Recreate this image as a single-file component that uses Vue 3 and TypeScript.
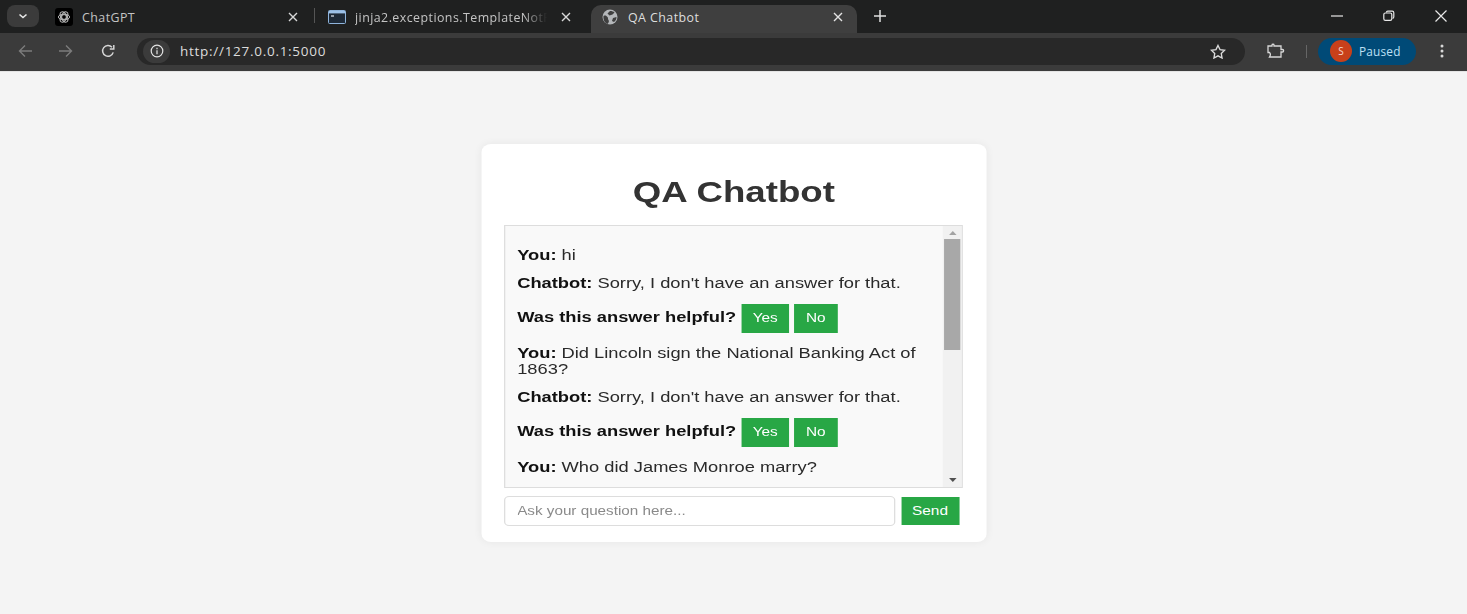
<template>
  <div class="page">
    <div class="tabstrip">
      <button class="tab-search">
        <svg width="12" height="12" viewBox="0 0 12 12"><path d="M2.5 4.500 6 7.500l3.500-3" fill="none" stroke="#e8e8e8" stroke-width="1.6" /></svg>
      </button>
      <div class="tab tab-first">
        <span class="gpt-icon">
          <svg width="14" height="14" viewBox="0 0 14 14" fill="none" stroke="#b8b8b8" stroke-width="1">
            <circle cx="7" cy="7" r="2.400" />
            <ellipse cx="7" cy="7" rx="5.600" ry="2.900" />
            <ellipse cx="7" cy="7" rx="5.600" ry="2.900" transform="rotate(60 7 7)" />
            <ellipse cx="7" cy="7" rx="5.600" ry="2.900" transform="rotate(120 7 7)" />
          </svg>
        </span>
        <span class="tab-title">ChatGPT</span>
        <svg class="tab-close" width="10" height="10" viewBox="0 0 10 10"><path d="M1 1l8 8M9 1 1 9" stroke="#d8d8d8" stroke-width="1.4" /></svg>
      </div>
      <span class="tab-sep"></span>
      <div class="tab tab-second">
        <svg class="term-icon" width="18" height="14" viewBox="0 0 18 14">
          <rect x="0.5" y="0.5" width="17" height="13" rx="1" fill="#1e2a38" stroke="#8fb4dc" />
          <rect x="1" y="1" width="16" height="2.400" fill="#9cc1e8" />
          <path d="M3 6h3" stroke="#dfe8f2" stroke-width="1.2" />
        </svg>
        <span class="tab-title fade">jinja2.exceptions.TemplateNotFound</span>
        <svg class="tab-close" width="10" height="10" viewBox="0 0 10 10"><path d="M1 1l8 8M9 1 1 9" stroke="#d8d8d8" stroke-width="1.4" /></svg>
      </div>
      <div class="tab tab-active">
        <svg width="16" height="16" viewBox="0 0 16 16">
          <circle cx="8" cy="8" r="7.500" fill="#b4b7ba" />
          <path d="M1.500 7c2-1 3 0 4 1s0 2 1 3 0 3-1 4C3 14 1 11 1.500 7zM8 2c2 0 3.500.5 4.500 1.500l-2 2-3 1-2-2zM11 9l3.500-1c0 2-1 4-2.500 5l-2-1z" fill="#3f3f3f" />
        </svg>
        <span class="tab-title">QA Chatbot</span>
        <svg class="tab-close" width="10" height="10" viewBox="0 0 10 10"><path d="M1 1l8 8M9 1 1 9" stroke="#e4e4e4" stroke-width="1.4" /></svg>
      </div>
      <svg class="new-tab" width="12" height="12" viewBox="0 0 12 12"><path d="M6 0v12M0 6h12" stroke="#e0e0e0" stroke-width="1.5" /></svg>
      <div class="win-controls">
        <svg width="12" height="12" viewBox="0 0 12 12"><path d="M0 6h12" stroke="#e8e8e8" stroke-width="1.2" /></svg>
        <svg width="12" height="12" viewBox="0 0 12 12" fill="none" stroke="#e8e8e8" stroke-width="1.2"><rect x="0.8" y="3" width="8" height="7.400" rx="1.600" /><path d="M3.400 2.600c0-1 .6-1.400 1.400-1.400h4.400c1 0 1.600.6 1.600 1.600v4c0 .9-.4 1.400-1.200 1.500" /></svg>
        <svg width="12" height="12" viewBox="0 0 12 12"><path d="M.5.5l11 11M11.500.5l-11 11" stroke="#e8e8e8" stroke-width="1.2" /></svg>
      </div>
    </div>

    <div class="toolbar">
      <svg class="nav-icon" width="14" height="14" viewBox="0 0 14 14" fill="none" stroke="#7c7c7c" stroke-width="1.4"><path d="M14 7H1.500M7 1.500 1.500 7 7 12.500" /></svg>
      <svg class="nav-icon forward" width="14" height="14" viewBox="0 0 14 14" fill="none" stroke="#7c7c7c" stroke-width="1.4"><path d="M0 7h12.500M7 1.500 12.500 7 7 12.500" /></svg>
      <svg class="nav-icon reload" width="14" height="14" viewBox="0 0 14 14" fill="none" stroke="#d6d6d6" stroke-width="1.5"><path d="M12.200 8.400A5.400 5.400 0 1 1 11 3.200" /><path d="M12.800 1v4h-4" /></svg>
      <div class="omnibox">
        <span class="info-chip">
          <svg width="14" height="14" viewBox="0 0 14 14" fill="none" stroke="#e4e4e4" stroke-width="1.2"><circle cx="7" cy="7" r="5.800" /><path d="M7 6.200v4M7 3.800v1.400" /></svg>
        </span>
        <span class="url">http://127.0.0.1:5000</span>
        <svg class="star" width="16" height="15" viewBox="0 0 18 17" fill="none" stroke="#dcdcdc" stroke-width="1.500"><path d="M9 1.600l2.300 4.800 5.200.7-3.800 3.600.9 5.200L9 13.400l-4.600 2.500.9-5.200L1.500 7.100l5.200-.7z" /></svg>
      </div>
      <svg class="ext-icon" width="18" height="16" viewBox="0 0 18 16" fill="none" stroke="#d8d8d8" stroke-width="1.3"><path d="M1 3h4V2c0-1 2-1 2 0v1h7v3.500h1.500c1.500 0 1.500 2.500 0 2.500H14v5H2.500c1-1.500 1-3.500 0-4.500H1z" /></svg>
      <span class="tool-sep"></span>
      <div class="profile">
        <span class="avatar">S</span>
        <span class="paused">Paused</span>
      </div>
      <svg class="menu" width="4" height="14" viewBox="0 0 4 14" fill="#d8d8d8"><circle cx="2" cy="2" r="1.500" /><circle cx="2" cy="7" r="1.500" /><circle cx="2" cy="12" r="1.500" /></svg>
    </div>

    <main class="content">
      <div class="card">
        <h1>QA Chatbot</h1>
        <div class="chat-box">
          <div class="messages">
            <template v-for="(m, i) in messages" :key="i">
              <div class="msg"><strong>You:</strong> {{ m.question }}</div>
              <template v-if="m.answer">
                <div class="msg"><strong>Chatbot:</strong> {{ m.answer }}</div>
                <div class="feedback">
                  <strong>Was this answer helpful?</strong>
                  <button class="btn yes">Yes</button>
                  <button class="btn no">No</button>
                </div>
              </template>
            </template>
          </div>
          <div class="scrollbar">
            <span class="arrow up"></span>
            <span class="thumb"></span>
            <span class="arrow down"></span>
          </div>
        </div>
        <div class="input-row">
          <input type="text" placeholder="Ask your question here..." />
          <button class="btn send">Send</button>
        </div>
      </div>
    </main>
  </div>
</template>

<script setup lang="ts">
interface Message {
  question: string
  answer?: string
}

const sorry = "Sorry, I don't have an answer for that."

const messages: Message[] = [
  { question: 'hi', answer: sorry },
  { question: 'Did Lincoln sign the National Banking Act of 1863?', answer: sorry },
  { question: 'Who did James Monroe marry?' }
]
</script>

<style>
html,
body {
  margin: 0;
  background: #f4f4f4;
}
</style>

<style scoped>
.page {
  display: flex;
  flex-direction: column;
  width: 1467px;
  height: 614px;
  overflow: hidden;
  font-family: "Liberation Sans", Arial, sans-serif;
}

/* browser chrome */
.tabstrip {
  display: flex;
  align-items: flex-end;
  height: 33px;
  flex: none;
  background: #1f2020;
  font-family: "Open Sans", sans-serif;
  font-size: 12.4px;
  color: #c4c4c4;
}

.tab-search {
  display: flex;
  align-items: center;
  justify-content: center;
  width: 32px;
  height: 22px;
  margin: 0 0 6px 7px;
  padding: 0;
  border: none;
  border-radius: 8px;
  background: #3b3b3b;
}

.tab {
  display: flex;
  align-items: center;
  height: 28px;
  box-sizing: border-box;
  padding-bottom: 4px;
}

.tab-title {
  white-space: nowrap;
  letter-spacing: 0.45px;
}

.tab-first {
  width: 275px;
  padding-left: 16px;
}

.gpt-icon {
  display: flex;
  align-items: center;
  justify-content: center;
  width: 18px;
  height: 18px;
  margin-right: 9px;
  border-radius: 3px;
  background: #000;
}

.tab-first .tab-close {
  margin-left: auto;
  margin-right: 16px;
}

.tab-sep {
  width: 1px;
  height: 15px;
  margin: 0 13px 10px 0;
  background: #555;
}

.tab-second {
  width: 263px;
}

.term-icon {
  margin-right: 9px;
  flex: none;
}

.fade {
  width: 192px;
  overflow: hidden;
  -webkit-mask-image: linear-gradient(to right, #000 88%, transparent);
  mask-image: linear-gradient(to right, #000 88%, transparent);
}

.tab-second .tab-close {
  margin-left: 14px;
}

.tab-active {
  width: 266px;
  padding-left: 11px;
  border-radius: 10px 10px 0 0;
  background: #3f3f3f;
  color: #dedede;
}

.tab-active .tab-title {
  margin-left: 10px;
}

.tab-active .tab-close {
  margin-left: auto;
  margin-right: 14px;
}

.new-tab {
  margin: 0 0 11px 17px;
}

.win-controls {
  display: flex;
  gap: 40px;
  margin: 0 20px 11px auto;
}

.toolbar {
  display: flex;
  align-items: center;
  height: 38px;
  flex: none;
  box-sizing: border-box;
  padding-bottom: 2px;
  background: #3b3b3b;
  font-family: "Open Sans", sans-serif;
}

.nav-icon {
  margin-left: 18px;
  flex: none;
}

.nav-icon.forward {
  margin-left: 27px;
}

.nav-icon.reload {
  margin-left: 28px;
}

.omnibox {
  display: flex;
  align-items: center;
  width: 1108px;
  height: 27px;
  margin-left: 22px;
  border-radius: 14px;
  background: #282828;
}

.info-chip {
  display: flex;
  align-items: center;
  justify-content: center;
  width: 27px;
  height: 23px;
  margin-left: 6px;
  border-radius: 12px;
  background: #3b3b3b;
}

.url {
  margin-left: 10px;
  font-size: 13.5px;
  letter-spacing: 0.72px;
  color: #dcdcdc;
}

.star {
  margin-left: auto;
  margin-right: 19px;
}

.ext-icon {
  margin-left: 22px;
}

.tool-sep {
  width: 1px;
  height: 13px;
  margin-left: 21px;
  background: #666;
}

.profile {
  display: flex;
  align-items: center;
  width: 98px;
  height: 27px;
  margin-left: 11px;
  border-radius: 14px;
  background: #004a77;
  font-size: 11.8px;
  color: #bfe0f5;
}

.avatar {
  display: flex;
  align-items: center;
  justify-content: center;
  width: 22px;
  height: 22px;
  margin-left: 12px;
  border-radius: 50%;
  background: #c8401a;
  font-size: 10px;
  color: #f5d8cf;
}

.paused {
  margin-left: 7px;
  letter-spacing: 0.2px;
}

.menu {
  margin-left: 24px;
}

/* page content */
.content {
  display: flex;
  flex: 1;
  align-items: center;
  justify-content: center;
  background: #f4f4f4;
  border-top: 1px solid #e4e4e4;
}

.card {
  box-sizing: border-box;
  width: 403.6px;
  height: 398px;
  padding: 0 18px;
  border-radius: 8px;
  background: #fff;
  box-shadow: 0 0 8px rgba(0, 0, 0, 0.06);
  transform: scaleX(1.25);
}

h1 {
  margin: 0;
  padding-top: 30px;
  height: 81px;
  box-sizing: border-box;
  font-size: 29.3px;
  line-height: 36px;
  text-align: center;
  color: #333;
}

.chat-box {
  display: flex;
  box-sizing: border-box;
  width: 367.2px;
  height: 263px;
  border: 1px solid #ddd;
  background: #f9f9f9;
}

.messages {
  flex: 1;
  min-width: 0;
  padding: 20.5px 10px 0 9.5px;
  overflow: hidden;
  font-size: 14.65px;
  line-height: 16px;
  color: #2a2a2a;
}

.msg {
  margin-bottom: 12px;
}

strong {
  color: #111;
}

.feedback {
  display: flex;
  align-items: center;
  gap: 4px;
  margin: 13.2px 0 12px;
}

.feedback strong {
  margin-bottom: 3px;
}

.btn {
  border: none;
  font-family: inherit;
  font-size: 12.3px;
  color: #fff;
  background: #28a745;
}

.yes,
.no {
  height: 29px;
  padding: 0 0 1px;
}

.yes {
  width: 38.5px;
}

.no {
  width: 34.5px;
}

.scrollbar {
  display: flex;
  flex: none;
  flex-direction: column;
  align-items: center;
  width: 15px;
  background: #f1f1f1;
}

.arrow {
  width: 0;
  height: 0;
  border-left: 3.5px solid transparent;
  border-right: 3.5px solid transparent;
}

.arrow.up {
  margin-top: 5px;
  border-bottom: 4px solid #a3a3a3;
}

.arrow.down {
  margin-top: auto;
  margin-bottom: 5px;
  border-top: 4px solid #505050;
}

.thumb {
  width: 13px;
  height: 111px;
  margin-top: 4px;
  background: #a8a8a8;
}

.input-row {
  display: flex;
  align-items: center;
  gap: 5px;
  margin-top: 8px;
  width: 364px;
}

input {
  flex: 1;
  min-width: 0;
  box-sizing: border-box;
  height: 30px;
  padding: 0 9.5px;
  border: 1px solid #ddd;
  border-radius: 4px;
  outline: none;
  font-family: inherit;
  font-size: 12.2px;
}

input::placeholder {
  color: #8a8a8a;
}

.send {
  flex: none;
  width: 46.5px;
  height: 28px;
  padding: 0;
}
</style>
